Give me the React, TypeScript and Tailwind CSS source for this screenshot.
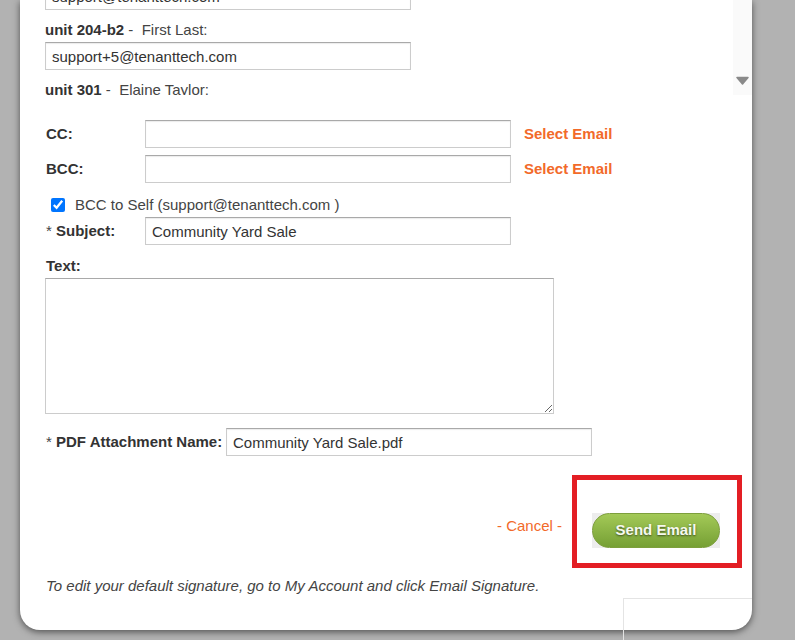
import React from "react";

const inputCls =
  "h-[28px] w-[366px] border border-[#cccccc] border-t-[#a9a9a9] bg-white px-[6px] text-[15px] text-[#333] outline-none shadow-[inset_0_1px_1px_rgba(0,0,0,0.08)] font-['Liberation_Sans',Arial,sans-serif]";

function RecipientLabel({ unit, name }: { unit: string; name: string }) {
  return (
    <div className="mt-[10px] mb-[2px] h-[20px] leading-[20px] whitespace-pre text-[15px] text-[#444]">
      <span className="font-bold text-[#333]">{unit}</span>
      {" -  " + name + ":"}
    </div>
  );
}

export default function App() {
  return (
    <div className="relative h-[640px] w-[795px] overflow-hidden bg-[#b2b2b2] font-['Liberation_Sans',Arial,sans-serif]">
      <div className="ml-[20px] flex h-[630px] w-[732px] flex-col rounded-b-[20px] bg-white shadow-[0_2px_7px_rgba(0,0,0,0.55)]">
        {/* recipients scroll area */}
        <div className="flex h-[95px] overflow-hidden">
          <div className="flex-1 pl-[25px]">
            <div className="-mt-[18px] flex flex-col">
              <input className={inputCls} defaultValue="support@tenanttech.com" />
              <RecipientLabel unit="unit 204-b2" name="First Last" />
              <input className={inputCls} defaultValue="support+5@tenanttech.com" />
              <RecipientLabel unit="unit 301" name="Elaine Taylor" />
            </div>
          </div>
          <div className="flex w-[19px] flex-col items-center bg-[#fafafa] pt-[76px]">
            <svg width="13" height="9" viewBox="0 0 13 9">
              <path d="M1 1.5 L12 1.5 L6.5 8 Z" fill="#8a8a8a" stroke="#8a8a8a" strokeWidth="1.5" strokeLinejoin="round" />
            </svg>
          </div>
        </div>

        {/* form */}
        <div className="flex flex-col pl-[25px] pr-[10px] text-[15px] text-[#333]">
          <div className="mt-[25px] flex items-center">
            <div className="w-[100px] pl-[1px] font-bold">CC:</div>
            <input className={inputCls} />
            <span className="ml-[13px] font-bold text-[#f26a2a]">Select Email</span>
          </div>
          <div className="mt-[7px] flex items-center">
            <div className="w-[100px] pl-[1px] font-bold">BCC:</div>
            <input className={inputCls} />
            <span className="ml-[13px] font-bold text-[#f26a2a]">Select Email</span>
          </div>
          <div className="mt-[12px] flex h-[20px] items-center">
            <input
              type="checkbox"
              defaultChecked
              className="m-0 ml-[6px] h-[14px] w-[14px] accent-[#0075ff]"
            />
            <span className="ml-[10px] text-[#444]">BCC to Self (support@tenanttech.com )</span>
          </div>
          <div className="mt-[2px] flex items-center">
            <div className="w-[100px] pl-[1px]">
              <span className="text-[#444]">* </span>
              <span className="font-bold">Subject:</span>
            </div>
            <input className={inputCls} defaultValue="Community Yard Sale" />
          </div>
          <div className="mt-[11px] h-[20px] pl-[1px] font-bold leading-[20px]">Text:</div>
          <textarea className="mt-[2px] h-[136px] w-[509px] resize border border-[#cccccc] border-t-[#a9a9a9] bg-white outline-none" />
          <div className="mt-[14px] flex items-center">
            <div className="w-[181px] pl-[1px]">
              <span className="text-[#444]">* </span>
              <span className="font-bold">PDF Attachment Name:</span>
            </div>
            <input className={inputCls} defaultValue="Community Yard Sale.pdf" />
          </div>

          <div className="mt-[19px] flex items-start justify-end">
            <span className="mt-[40px] mr-[10px] text-[#f26a2a]">- Cancel -</span>
            <div className="border-[5px] border-[#e31e24] pl-[15px] pr-[17px] pt-[33px] pb-[15px]">
              <div className="bg-[#ededed]">
                <button className="flex h-[35px] w-[128px] items-center justify-center rounded-full border border-[#7d9f3c] bg-gradient-to-b from-[#a3c957] to-[#76a034] text-[15px] font-bold text-[#f6f9ee] [text-shadow:0_1px_2px_rgba(0,0,0,0.55)]">
                  Send Email
                </button>
              </div>
            </div>
          </div>

          <div className="mt-[8px] h-[20px] pl-[1px] italic leading-[20px] text-[#444]">
            To edit your default signature, go to My Account and click Email Signature.
          </div>
        </div>
      </div>
      <div className="absolute left-[623px] top-[598px] h-[42px] w-[129px] border-l border-t border-[#e4e4e4]" />
    </div>
  );
}
